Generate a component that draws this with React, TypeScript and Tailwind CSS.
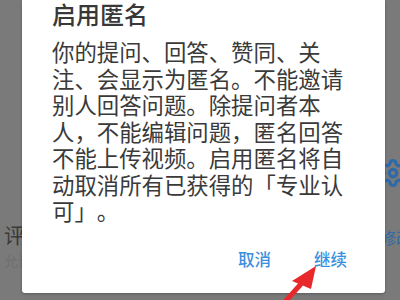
import { Settings } from "lucide-react";

const font = { fontFamily: '"Noto Sans CJK SC", "Noto Sans", sans-serif' };

export default function App() {
  return (
    <div
      className="relative h-[300px] w-[400px] overflow-hidden bg-[#7a7a7a]"
      style={font}
    >
      {/* --- Page behind the dim --- */}
      <div className="flex w-[412px] flex-col pt-[158px]">
        <div className="flex justify-end pr-[4px]">
          <Settings className="h-[30px] w-[30px] text-[#2f6aa8]" strokeWidth={2.6} />
        </div>
        <div className="mt-[32px] flex items-start justify-between pl-[4px]">
          <div className="flex flex-col">
            <span className="text-[21px] leading-[28px] text-[#3a3a3a]">评论</span>
            <span className="mt-[2px] text-[14px] leading-[20px] text-[#6f6f6f]">允许</span>
          </div>
          <span className="mt-[6px] text-[16px] leading-[22px] text-[#2f6aa8]">修改</span>
        </div>
      </div>

      {/* --- Dialog --- */}
      <div className="absolute left-[22px] top-0 flex h-[293px] w-[363px] flex-col rounded-b-[3px] bg-white pl-[30px] shadow-[0_1px_3px_rgba(0,0,0,0.25)]">
        <h2 className="mt-0 text-[24px] font-medium leading-[28px] text-[#383838]">
          启用匿名
        </h2>
        <p className="mt-[10px] w-[302px] text-[22.4px] leading-[26.5px] text-[#3a3a3a] [text-spacing-trim:space-all]">
          你的提问、回答、赞同、关注、会显示为匿名。不能邀请别人回答问题。除提问者本人，不能编辑问题，匿名回答不能上传视频。启用匿名将自动取消所有已获得的「专业认可」。
        </p>
        <div className="mt-[23px] flex justify-end gap-[43px] pr-[38px] text-[16.5px] font-medium leading-[24px] text-[#3a8fdc]">
          <button>取消</button>
          <button>继续</button>
        </div>
      </div>

      {/* --- Red annotation arrow --- */}
      <svg
        className="pointer-events-none absolute left-0 top-0"
        width="400"
        height="300"
        viewBox="0 0 400 300"
      >
        <line x1="301" y1="284" x2="283" y2="304" stroke="#e8282b" strokeWidth="5" />
        <polygon points="316,266 292,281 311,289" fill="#e8282b" />
      </svg>
    </div>
  );
}
